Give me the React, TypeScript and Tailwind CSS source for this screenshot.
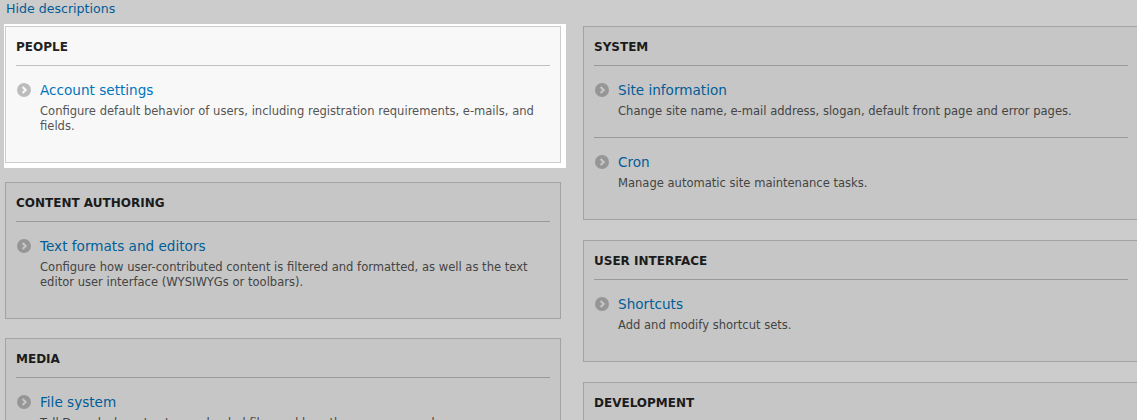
import React from "react";

type Item = { title: string; desc: string };
type Panel = { title: string; items: Item[] };

const FONT = { fontFamily: '"DejaVu Sans", Verdana, sans-serif' };

function Bullet({ dim }: { dim: boolean }) {
  return (
    <svg width="14" height="14" viewBox="0 0 14 14" className="shrink-0">
      <circle cx="7" cy="7" r="7" fill={dim ? "#969696" : "#bcbcbc"} />
      <path
        d="M5.6 3.9 L8.7 7 L5.6 10.1"
        fill="none"
        stroke={dim ? "#c6c6c6" : "#f8f8f8"}
        strokeWidth="2.1"
        strokeLinecap="butt"
      />
    </svg>
  );
}

function PanelBox({ panel, dim }: { panel: Panel; dim: boolean }) {
  return (
    <div
      className={
        dim
          ? "border border-[#a3a3a3] bg-[#c6c6c6] px-[10px] pb-[10px]"
          : "border border-[#cdcdcd] bg-[#f8f8f8] px-[10px] pb-[10px]"
      }
    >
      <h3
        className={
          dim
            ? "border-b border-[#9a9a9a] pt-[12px] pb-[10px] text-[12px] font-bold leading-[16px] uppercase text-[#1b1b1b]"
            : "border-b border-[#c0c0c0] pt-[12px] pb-[10px] text-[12px] font-bold leading-[16px] uppercase text-[#222222]"
        }
      >
        {panel.title}
      </h3>
      <ul>
        {panel.items.map((it, i) => (
          <li
            key={it.title}
            className={
              i > 0
                ? dim
                  ? "border-t border-[#9a9a9a] pt-[15px] pb-[18px]"
                  : "border-t border-[#c0c0c0] pt-[15px] pb-[18px]"
                : "pt-[15px] pb-[18px]"
            }
          >
            <div className="flex items-center h-[18px] pl-[1px]">
              <Bullet dim={dim} />
              <a
                className={
                  dim
                    ? "ml-[9px] text-[13.6px] leading-[18px] text-[#005d97]"
                    : "ml-[9px] text-[13.6px] leading-[18px] text-[#0074bd]"
                }
              >
                {it.title}
              </a>
            </div>
            <div
              className={
                dim
                  ? "mt-[5px] pl-[24px] pr-[10px] text-[11.55px] leading-[15px] text-[#444444]"
                  : "mt-[5px] pl-[24px] pr-[10px] text-[11.55px] leading-[15px] text-[#555555]"
              }
            >
              {it.desc}
            </div>
          </li>
        ))}
      </ul>
    </div>
  );
}

const people: Panel = {
  title: "People",
  items: [
    {
      title: "Account settings",
      desc: "Configure default behavior of users, including registration requirements, e-mails, and fields.",
    },
  ],
};

const contentAuthoring: Panel = {
  title: "Content authoring",
  items: [
    {
      title: "Text formats and editors",
      desc: "Configure how user-contributed content is filtered and formatted, as well as the text editor user interface (WYSIWYGs or toolbars).",
    },
  ],
};

const media: Panel = {
  title: "Media",
  items: [
    {
      title: "File system",
      desc: "Tell Drupal where to store uploaded files and how they are accessed.",
    },
    {
      title: "Image styles",
      desc: "Configure styles that can be used for resizing or adjusting images on display.",
    },
  ],
};

const system: Panel = {
  title: "System",
  items: [
    {
      title: "Site information",
      desc: "Change site name, e-mail address, slogan, default front page and error pages.",
    },
    { title: "Cron", desc: "Manage automatic site maintenance tasks." },
  ],
};

const userInterface: Panel = {
  title: "User interface",
  items: [{ title: "Shortcuts", desc: "Add and modify shortcut sets." }],
};

const development: Panel = {
  title: "Development",
  items: [
    {
      title: "Performance",
      desc: "Configure caching and bandwidth optimizations.",
    },
  ],
};

export default function App() {
  return (
    <div
      className="w-[1137px] h-[420px] overflow-hidden bg-[#cccccc]"
      style={FONT}
    >
      <div className="h-[18px] pl-[6px] text-[12.6px] leading-[18px] text-[#005d97]">
        <a>Hide descriptions</a>
      </div>
      <div className="mt-[8px] flex items-start gap-[22px] pl-[5px] w-[1200px]">
        <div className="w-[556px] shrink-0 flex flex-col gap-[19px]">
          <div className="relative">
            <div className="absolute -top-[2px] -left-[1px] -right-[5px] -bottom-[5px] bg-white" />
            <div className="relative">
              <PanelBox panel={people} dim={false} />
            </div>
          </div>
          <PanelBox panel={contentAuthoring} dim />
          <PanelBox panel={media} dim />
        </div>
        <div className="w-[556px] shrink-0 flex flex-col gap-[20px]">
          <PanelBox panel={system} dim />
          <PanelBox panel={userInterface} dim />
          <PanelBox panel={development} dim />
        </div>
      </div>
    </div>
  );
}
